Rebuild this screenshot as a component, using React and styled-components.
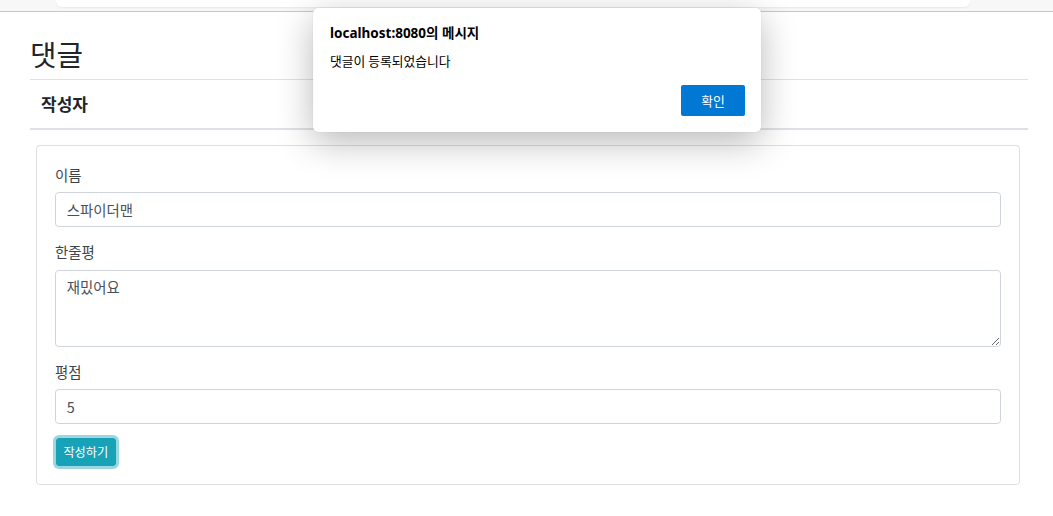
import styled, { createGlobalStyle } from "styled-components";

const GlobalStyle = createGlobalStyle`
  html, body {
    margin: 0;
    padding: 0;
    background: #fff;
  }
  body {
    font-family: "Noto Sans CJK KR", "Noto Sans", sans-serif;
    color: #212529;
    font-size: 14.4px;
    line-height: 1.5;
  }
  * {
    box-sizing: border-box;
  }
`;

const Page = styled.div`
  position: relative;
  width: 1053px;
  height: 516px;
  overflow: hidden;
`;

const ChromeStrip = styled.div`
  height: 12px;
  background: #f7f7f7;
  border-bottom: 1px solid #c6c6c6;
  display: flex;
  align-items: flex-start;
  padding-left: 56px;
`;

const AddressTail = styled.div`
  width: 914px;
  height: 7px;
  background: #fff;
  border-radius: 0 0 6px 6px;
  box-shadow: 0 1px 2px rgba(0, 0, 0, 0.06);
`;

const Container = styled.div`
  padding: 24px 25px 0 30px;
`;

const Title = styled.h2`
  margin: 0 0 7px;
  font-size: 28.8px;
  font-weight: 400;
  line-height: 36px;
  color: #212529;
`;

const Table = styled.table`
  width: 100%;
  border-collapse: collapse;
  margin-bottom: 15px;
`;

const HeadCell = styled.th`
  text-align: left;
  padding: 11px 11px;
  font-size: 17px;
  line-height: 26px;
  font-weight: 700;
  border-top: 1px solid #dee2e6;
  border-bottom: 2px solid #dee2e6;
`;

const Card = styled.form`
  margin: 0 8px 0 6px;
  border: 1px solid rgba(0, 0, 0, 0.125);
  border-radius: 3.6px;
  padding: 18px;
  display: flex;
  flex-direction: column;
`;

const Group = styled.div`
  display: flex;
  flex-direction: column;
  margin-bottom: 14.4px;
`;

const Label = styled.label`
  font-size: 14.4px;
  line-height: 21.6px;
  margin-bottom: 6.6px;
  color: #3d4349;
`;

const fieldCss = `
  width: 100%;
  font-family: inherit;
  font-size: 14.4px;
  line-height: 21.6px;
  color: #495057;
  background: #fff;
  border: 1px solid #ced4da;
  border-radius: 3.6px;
  padding: 5.4px 10.8px;
  outline: none;
`;

const Input = styled.input`
  ${fieldCss}
  height: 34.8px;
`;

const TextArea = styled.textarea`
  ${fieldCss}
  height: 77px;
  resize: vertical;
  display: block;
`;

const SubmitButton = styled.button`
  align-self: flex-start;
  margin-left: 1px;
  font-family: inherit;
  font-size: 12.2px;
  line-height: 18.9px;
  padding: 3.6px 6.4px;
  color: #fff;
  background: #17a2b8;
  border: 1px solid #17a2b8;
  border-radius: 3px;
  box-shadow: 0 0 0 3px rgba(58, 176, 195, 0.5);
`;

const Dialog = styled.div`
  position: absolute;
  left: 313px;
  top: 8px;
  width: 448px;
  height: 124px;
  background: #fff;
  border-radius: 5px;
  box-shadow: 0 10px 36px rgba(0, 0, 0, 0.28), 0 0 1px rgba(0, 0, 0, 0.2);
  padding: 15px 16px 15px 17px;
  display: flex;
  flex-direction: column;
`;

const DialogTitle = styled.div`
  font-family: "Noto Sans", "Noto Sans CJK KR", sans-serif;
  font-weight: 700;
  font-size: 13.5px;
  line-height: 20px;
  color: #000;
`;

const DialogText = styled.div`
  margin-top: 8px;
  font-size: 12.8px;
  line-height: 20px;
  color: #000;
`;

const DialogActions = styled.div`
  margin-top: auto;
  display: flex;
  justify-content: flex-end;
`;

const OkButton = styled.button`
  width: 64px;
  height: 31px;
  font-family: inherit;
  font-size: 12.8px;
  color: #fff;
  background: #0078d4;
  border: none;
  border-radius: 2px;
  margin-bottom: 1px;
`;

export default function App() {
  return (
    <>
      <GlobalStyle />
      <Page>
        <ChromeStrip>
          <AddressTail />
        </ChromeStrip>
        <Container>
          <Title>댓글</Title>
          <Table>
            <thead>
              <tr>
                <HeadCell>작성자</HeadCell>
              </tr>
            </thead>
          </Table>
          <Card onSubmit={(e) => e.preventDefault()}>
            <Group>
              <Label htmlFor="name">이름</Label>
              <Input id="name" defaultValue="스파이더맨" />
            </Group>
            <Group>
              <Label htmlFor="comment">한줄평</Label>
              <TextArea id="comment" rows={3} defaultValue="재밌어요" />
            </Group>
            <Group>
              <Label htmlFor="score">평점</Label>
              <Input id="score" defaultValue="5" />
            </Group>
            <SubmitButton type="submit">작성하기</SubmitButton>
          </Card>
        </Container>
        <Dialog role="alertdialog">
          <DialogTitle>localhost:8080의 메시지</DialogTitle>
          <DialogText>댓글이 등록되었습니다</DialogText>
          <DialogActions>
            <OkButton>확인</OkButton>
          </DialogActions>
        </Dialog>
      </Page>
    </>
  );
}
